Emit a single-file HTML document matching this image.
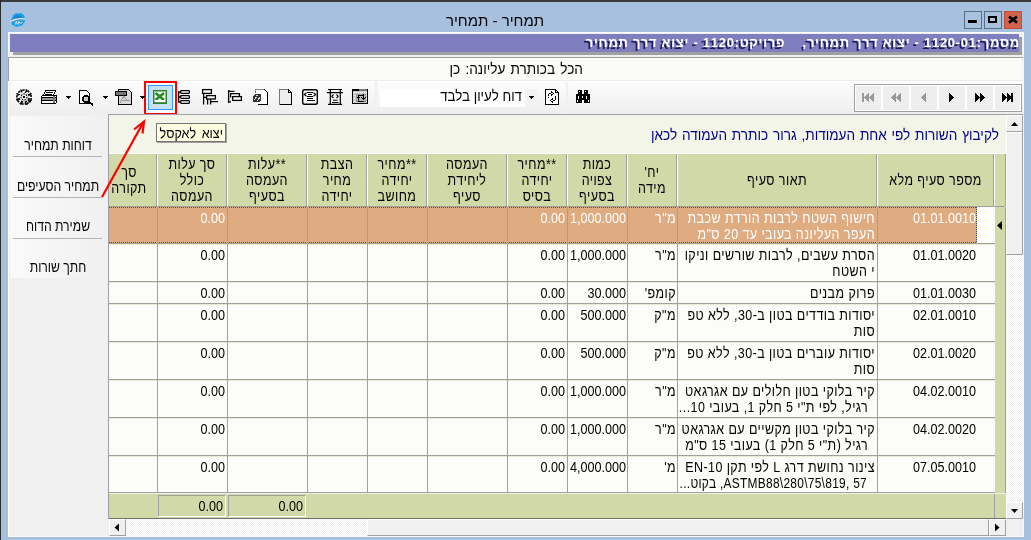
<!DOCTYPE html>
<html><head><meta charset="utf-8">
<style>
*{margin:0;padding:0;box-sizing:border-box}
html,body{width:1031px;height:540px;overflow:hidden;background:#A7C0DD;}
body{will-change:transform;font-family:"Liberation Sans",sans-serif;color:#000}
.a{position:absolute}
.t{position:absolute;white-space:nowrap;font-size:13px;line-height:16px}
.r{text-align:right;direction:rtl}
.hl{position:absolute;height:1px}
.vl{position:absolute;width:1px}
.num{font-size:12px;transform-origin:0 50%;transform:scaleY(1.12)}
</style></head><body>
<!-- window frame -->
<div class="a" style="left:0;top:0;width:1031px;height:2px;background:#3A3A3A"></div>
<div class="a" style="left:0;top:0;width:1px;height:540px;background:#2A2A2A"></div>

<!-- title -->
<div class="t" id="title" style="left:400px;top:12px;width:190px;text-align:center;font-size:15px;line-height:18px;direction:rtl">תמחיר - תמחיר</div>

<!-- client -->
<div class="a" id="client" style="left:8px;top:32px;width:1016px;height:505px;background:#F0F0F0;border-top:1px solid #FFF;border-left:1px solid #FFF;border-right:1px solid #F8F8F8;border-bottom:1px solid #F8F8F8"></div>

<!-- purple header -->
<div class="a" style="left:13px;top:37px;width:1009px;height:18px;background:#A0A0A0"></div>
<div class="a" style="left:10px;top:34px;width:1009px;height:18px;background:#7F7FBF"></div>

<!-- info row -->
<div class="a" style="left:8px;top:57px;width:1015px;height:1px;background:#A0A0A0"></div>
<div class="a" style="left:8px;top:57px;width:1px;height:24px;background:#A0A0A0"></div>
<div class="a" style="left:9px;top:58px;width:1013px;height:22px;background:#FBFBF7"></div>
<div class="t r" style="left:402px;top:61px;width:181px;font-size:13.6px;word-spacing:1.5px;transform:scaleY(1.1);transform-origin:0 0">הכל בכותרת עליונה: כן</div>
<div class="a" style="left:9px;top:80px;width:1014px;height:1px;background:#ECECEA"></div>

<!-- toolbar band -->
<div class="a" style="left:9px;top:81px;width:1014px;height:33px;background:#F0F0F0"></div>



<!-- toolbar strips -->
<div class="a" style="left:9px;top:81px;width:1014px;height:35px;background:#F0F0F0;border-top:1px solid #FFF"></div>
<div class="a" style="left:10px;top:82px;width:365px;height:33px;border-radius:3px;background:linear-gradient(#FDFDFD,#EDEDED)"></div>
<div class="a" style="left:377px;top:82px;width:189px;height:33px;border-radius:3px;background:linear-gradient(#FDFDFD,#EDEDED)"></div>
<div class="a" style="left:568px;top:82px;width:455px;height:33px;border-radius:3px;background:linear-gradient(#FDFDFD,#EDEDED)"></div>

<!-- combo -->
<div class="a" style="left:380px;top:89px;width:157px;height:18px;background:#FFF"></div>
<div class="a" style="left:525px;top:89px;width:12px;height:18px;background:#F3F3F3"></div>
<div class="t r" style="left:400px;top:88px;width:122px;font-size:13.3px;line-height:16px;transform:scaleY(1.1);transform-origin:0 0">דוח לעיון בלבד</div>
<!-- red highlight box -->
<div class="a" style="left:146px;top:83px;width:29px;height:30px;background:#F4FAFE"></div>
<div class="a" style="left:148px;top:85px;width:25px;height:25px;border:1px solid #3399FF;background:#C6E0F8"></div>
<div class="a" style="left:144px;top:81px;width:33px;height:34px;border:2px solid #FF0000"></div>
<!-- nav box -->
<div class="a" style="left:854px;top:84px;width:168px;height:28px;border:1px solid #A0A0A0;background:#FFF"></div>
<div class="a" style="left:856px;top:86px;width:25px;height:24px;background:#EEE"></div>
<div class="a" style="left:883px;top:86px;width:26px;height:24px;background:#EEE"></div>
<div class="a" style="left:911px;top:86px;width:26px;height:24px;background:#EEE"></div>
<div class="a" style="left:939px;top:86px;width:26px;height:24px;background:#EEE"></div>
<div class="a" style="left:967px;top:86px;width:26px;height:24px;background:#EEE"></div>
<div class="a" style="left:995px;top:86px;width:25px;height:24px;background:#EEE"></div>

<svg class="a" style="left:0;top:0" width="1031" height="120" viewBox="0 0 1031 120">
<g shape-rendering="crispEdges">
</g>
<!-- gear -->
<path d="M21.79 92.30 L21.50 89.93 L26.50 89.93 L26.21 92.30 L25.76 92.11 L27.23 90.23 L30.77 93.77 L28.89 95.24 L28.70 94.79 L31.07 94.50 L31.07 99.50 L28.70 99.21 L28.89 98.76 L30.77 100.23 L27.23 103.77 L25.76 101.89 L26.21 101.70 L26.50 104.07 L21.50 104.07 L21.79 101.70 L22.24 101.89 L20.77 103.77 L17.23 100.23 L19.11 98.76 L19.30 99.21 L16.93 99.50 L16.93 94.50 L19.30 94.79 L19.11 95.24 L17.23 93.77 L20.77 90.23 L22.24 92.11 Z" fill="none" stroke="#000" stroke-width="1.6" stroke-dasharray="2.2 1.1"/>
<circle cx="24" cy="97" r="3" fill="none" stroke="#000" stroke-width="1.1" stroke-dasharray="1.6 1"/>
<rect x="23" y="96" width="2" height="2" fill="#000"/>
<path d="M28 100 L30.5 102.5 M25 102.5 L26 104.5" stroke="#000" stroke-width="1.5"/>
<g shape-rendering="crispEdges">
<!-- printer -->
<path d="M45.5 90.5 H55.5 L53.5 95.5 H43.5 Z" fill="#FFF" stroke="#000"/>
<path d="M46 92.5 H53 M45 94 H52" stroke="#000"/>
<rect x="41.5" y="95.5" width="15" height="8" rx="1.5" fill="#FFF" stroke="#000"/>
<rect x="42" y="98" width="14" height="2" fill="#999"/>
<path d="M42 97.5 H56 M42 100.5 H56" stroke="#000"/>
<rect x="53" y="96" width="2" height="7" fill="#777"/>
<path d="M65 96 H71 L68 99 Z" fill="#000"/>
<!-- preview -->
<path d="M79.5 90.5 H86.5 L89.5 93.5 V103.5 H79.5 Z" fill="#FFF" stroke="#000"/>
<circle cx="86" cy="99" r="3" fill="#CCC" stroke="#000" stroke-width="1.5"/>
<path d="M88 101 L93 105" stroke="#000" stroke-width="2"/>
<path d="M102 96 H108 L105 99 Z" fill="#000"/>
<!-- pdf -->
<path d="M118.5 89.5 H128.5 L131.5 92.5 V104.5 H118.5 Z" fill="#D8D8D8" stroke="#000"/>
<rect x="115" y="91" width="12" height="5" fill="#000"/>
<rect x="116" y="92" width="10" height="3" fill="#777"/>
<path d="M120 103 Q123 97 124 96 Q126 101 130 101 M121 100 H129" stroke="#999" fill="none"/>
<path d="M139 96 H145 L142 99 Z" fill="#000"/>
<!-- excel -->
<rect x="153" y="90" width="14" height="14" fill="#2F7F2F"/>
<rect x="154" y="91" width="12" height="12" fill="#8CC88C"/>
<rect x="155" y="92" width="10" height="10" fill="#FFF"/>
<path d="M155.5 93 L164 100 M164 93 L155.5 100" stroke="#2A8A2A" stroke-width="2.8" shape-rendering="geometricPrecision"/>
<rect x="155" y="100" width="10" height="2" fill="#FFF"/>
<rect x="154" y="102" width="12" height="1" fill="#4A9A4A"/>
</g>
<g fill="none" stroke="#000" stroke-width="1.3">
<!-- icon 9 stacked -->
<rect fill="#FFF" x="180.6" y="90.6" width="8.8" height="2.8" rx="0.8"/>
<rect fill="#FFF" x="180.6" y="95.6" width="8.8" height="2.8" rx="0.8"/>
<rect fill="#FFF" x="180.6" y="100.6" width="8.8" height="2.8" rx="0.8"/>
<path d="M178.6 92 V102 M178 92 H180.5 M178 97 H180.5 M178 102 H180.5"/>
<!-- icon 10 tree -->
<rect fill="#FFF" x="202.6" y="89.6" width="8.8" height="3.8"/>
<rect fill="#FFF" x="206.6" y="95.6" width="8.8" height="3.4"/>
<path d="M203.6 93.5 V104.5 M203.6 97.3 H206.5 M207.6 99 V104.5 M210.6 99 V104.5 M210 101.6 H218"/>
<!-- icon 11 -->
<path d="M228.6 90 V103 M228 91.4 H234.5 M228 101.8 H231"/>
<path d="M230.6 97.4 V93.6 H239.4 V96.2"/>
<rect fill="#FFF" x="232.6" y="96.6" width="8.8" height="3.8"/>
</g>
<g shape-rendering="crispEdges">
<!-- icon 12 -->
<path d="M255.5 93 V89.5 H264.5 L267.5 92.5 V104.5 H258" fill="#FFF" stroke="#000"/>
<path d="M255.5 93 V89.5 H264" fill="none" stroke="#888"/>
<path d="M253 96 L255 94 H261 V101 L259 102 H252.5 V96 Z" fill="#333"/>
<path d="M254 100 L256.5 97 M257 101 L260 97.5 M256 95.5 L258 95" stroke="#DDD"/>
<!-- icon 13 blank -->
<path d="M279.5 104.5 V89.5 H288.5" fill="none" stroke="#777"/>
<rect x="280" y="90" width="11" height="14" fill="#EEE"/>
<path d="M288.5 89.5 L291.5 92.5 V104.5 H279.5" fill="none" stroke="#000"/>
<path d="M288.5 89.5 V92.5 H291.5" fill="none" stroke="#000"/>
</g>
<g fill="none" stroke="#000">
<!-- icon 14 -->
<rect x="302.7" y="89.7" width="14.6" height="14.6" rx="1.8" stroke-width="1.4" fill="#FFF"/>
<path d="M307 92.5 H313 M308 94.5 H312 M307 96.5 H313 M307 98.5 H313 M307 100.5 H315" stroke-width="1.1"/>
<path d="M306.5 92.8 L304.3 94.5 L306.5 96.2 M313.5 92.8 L315.7 94.5 L313.5 96.2" stroke-width="1.1"/>
<!-- icon 15 -->
<path d="M328 89.5 H342 M327 92.6 H343 M328 104.3 H342 M330.3 89 V104.5 M340.3 89 V104.5" stroke-width="1.2"/>
<path d="M333.5 94.5 L331.8 96.3 L333.5 98 M336.5 94.5 L338.2 96.3 L336.5 98 M333 100.3 H337.5 M332 102.5 H338.5" stroke-width="1.1"/>
</g>
<g shape-rendering="crispEdges">
<!-- icon 16 -->
<rect x="352" y="89" width="16" height="15" fill="#000"/>
<rect x="353" y="91" width="14" height="12" fill="#CCC"/>
<rect x="359" y="89" width="8" height="2" fill="#777"/>
<path d="M354 92.5 H367 M354 95.5 H367 M354 98.5 H367 M354 101.5 H367" stroke="#FFF" stroke-dasharray="1 1"/>
<rect x="356" y="94" width="10" height="8" fill="#999"/>
<rect x="357" y="95" width="8" height="6" fill="#BBB"/>
<path d="M358.5 102 V96.5 M356.5 98.5 L358.5 96.5 L360.5 98.5 M363.5 94 V99.5 M361.5 97.5 L363.5 99.5 L365.5 97.5 M358 95.5 H363 M359 101.5 H364" stroke="#000" fill="none"/>
</g>
<g shape-rendering="crispEdges">
<!-- combo arrow -->
<path d="M528 96 H534 L531 99 Z" fill="#000"/>
<!-- refresh doc -->
<path d="M545.5 89.5 H555.5 L558.5 92.5 V104.5 H545.5 Z" fill="#FFF" stroke="#000"/>
<path d="M555.5 89.5 V92.5 H558.5" fill="none" stroke="#000"/>
<path d="M548.5 98 V95.5 Q548.5 93.5 551 93.5 H552" stroke="#000" stroke-dasharray="1.5 0.8" fill="none"/>
<path d="M551 91.5 L553.5 93.5 L551 95.5" stroke="#000" fill="none"/>
<path d="M555.5 96 V98.5 Q555.5 100.5 553 100.5 H552" stroke="#000" stroke-dasharray="1.5 0.8" fill="none"/>
<path d="M553 98.5 L550.5 100.5 L553 102.5" stroke="#000" fill="none"/>
<!-- binoculars -->
<g fill="#000">
<rect x="578" y="90" width="4" height="5"/><rect x="576" y="94" width="7" height="9"/>
<rect x="584" y="90" width="4" height="5"/><rect x="583" y="94" width="7" height="9"/>
</g>
<g fill="#FFF">
<rect x="579" y="91" width="1" height="1"/><rect x="585" y="91" width="1" height="1"/>
<rect x="578" y="96" width="1" height="3"/><rect x="582" y="96" width="1" height="2"/><rect x="586" y="96" width="1" height="3"/>
<rect x="577" y="100" width="1" height="2"/><rect x="588" y="100" width="1" height="2"/>
<rect x="582" y="100" width="2" height="3"/>
</g>
<!-- nav icons -->
<g fill="#999">
<rect x="862" y="93" width="2" height="9"/>
<path d="M864 97.5 L869 93 V102 Z M869 97.5 L874 93 V102 Z"/>
<path d="M891 97.5 L896 93 V102 Z M896 97.5 L901 93 V102 Z"/>
<path d="M921 97.5 L926 93 V102 Z"/>
</g>
<g fill="#000">
<path d="M949 93 L954.5 97.5 L949 102 Z"/>
<path d="M975 93 L980 97.5 L975 102 Z M980 93 L985 97.5 L980 102 Z"/>
<path d="M1002 93 L1007 97.5 L1002 102 Z M1007 93 L1012 97.5 L1007 102 Z"/>
<rect x="1011" y="93" width="2" height="9"/>
</g>
</g>
</svg>

<!-- main panel -->
<div class="a" id="panel" style="left:108px;top:114px;width:915px;height:405px;border:1px solid #A0A0A0;background:#F4F5E9"></div>


<!-- sidebar -->
<div class="a" style="left:10px;top:116px;width:94px;height:162px;background:linear-gradient(90deg,#FAFAFA,#F0F0F0)"></div>
<div class="t" style="left:10px;top:136px;width:96px;text-align:center;direction:rtl;font-size:12.2px;transform:scaleY(1.2);transform-origin:0 0">דוחות תמחיר</div>
<div class="a" style="left:13px;top:156px;width:89px;height:1px;background:#B4B4B4"></div>
<div class="t" style="left:10px;top:176.5px;width:96px;text-align:center;direction:rtl;font-size:12.2px;transform:scaleY(1.2);transform-origin:0 0">תמחיר הסעיפים</div>
<div class="a" style="left:13px;top:197px;width:89px;height:1px;background:#B4B4B4"></div>
<div class="t" style="left:10px;top:217px;width:96px;text-align:center;direction:rtl;font-size:12.2px;transform:scaleY(1.2);transform-origin:0 0">שמירת הדוח</div>
<div class="a" style="left:13px;top:238px;width:89px;height:1px;background:#B4B4B4"></div>
<div class="t" style="left:10px;top:258px;width:96px;text-align:center;direction:rtl;font-size:12.2px;transform:scaleY(1.2);transform-origin:0 0">חתך שורות</div>

<!-- title icon -->
<svg class="a" style="left:9px;top:11px" width="18" height="18" viewBox="0 0 18 18">
<path d="M5 3.5 Q7 1.5 9.5 2.5 Q12 1 14 3.5 Q16.5 4.5 15.5 7.5 Q17 10 14.5 12.5 Q13.5 15.5 10 15 Q7.5 17 5 14.5 Q2 14 2.5 11 Q1 8 3.5 6.5 Q3 4.5 5 3.5Z" fill="#1AA0E8"/>
<path d="M6 5 Q9 3.5 12 5 Q14 6.5 13 8 L5 8 Q4.5 6 6 5Z" fill="#1A6FB8" opacity="0.6"/>
<path d="M1.5 10.5 Q8 6.5 16 8.2" stroke="#F4F4F4" stroke-width="1.3" fill="none"/>
<path d="M2 11.3 Q8 8 15.5 9" stroke="#8A9AAA" stroke-width="0.7" fill="none"/>
<path d="M6.5 13.5 L7.2 10.5 L8.5 13.5 M9 13.5 L9.5 10.5 Q11 10.5 10.5 12 L9.5 12 M11.5 13 Q12.5 10 13.5 11.5" stroke="#E8E8E8" stroke-width="0.9" fill="none"/>
</svg>
<!-- title buttons -->
<div class="a" style="left:964px;top:11px;width:18px;height:18px;border:1px solid #5A6E8A;background:#A9C2DE"></div>
<div class="a" style="left:968px;top:20px;width:9px;height:3px;background:#000"></div>
<div class="a" style="left:984px;top:11px;width:18px;height:18px;border:1px solid #5A6E8A;background:#A9C2DE"></div>
<div class="a" style="left:988px;top:16px;width:9px;height:7px;border:2px solid #000;border-top-width:2px"></div>
<div class="a" style="left:1004px;top:11px;width:18px;height:18px;border:1px solid #C0503A;background:#D0654F"></div>
<svg class="a" style="left:1007px;top:15px" width="12" height="9" viewBox="0 0 12 9"><path d="M2 1.6 L10 7.6 M10 1.6 L2 7.6" stroke="#000" stroke-width="2.6"/></svg>

<!-- purple header text -->
<div class="t" id="ptext" style="left:502px;top:36px;width:518px;text-align:right;direction:rtl;font-weight:bold;font-size:13px;line-height:14px;letter-spacing:0.72px;color:#FFF;text-shadow:-2px 2px 0 #1C1C58">מסמך:1120-01 - יצוא דרך תמחיר,&nbsp;&nbsp;&nbsp; פרויקט:1120 - יצוא דרך תמחיר</div>
<style>.hb{font-size:12.5px;letter-spacing:0.42px;line-height:13.333px;transform:scaleY(1.2);transform-origin:0 0} .nm{font-size:12.6px;line-height:14.159px;transform:scaleY(1.13);transform-origin:0 0;text-align:right}</style>
<div class="a" style="left:109px;top:115px;width:897px;height:38px;background:#F4F5E9"></div>
<div class="t r" style="left:601px;top:127px;width:398px;font-size:13.6px;word-spacing:1px;color:#000080;transform:scaleY(1.1);transform-origin:0 0">לקיבוץ השורות לפי אחת העמודות, גרור כותרת העמודה לכאן</div>
<div class="a" style="left:109px;top:153px;width:896px;height:53px;background:#D1D9A9;border-top:1px solid #FFF"></div>
<div class="a" style="left:109px;top:206px;width:896px;height:1px;background:#A0A0A0"></div>
<div class="a" style="left:156px;top:154px;width:1px;height:52px;background:#A0A0A0"></div>
<div class="a" style="left:157px;top:154px;width:1px;height:52px;background:#FFF"></div>
<div class="a" style="left:226px;top:154px;width:1px;height:52px;background:#A0A0A0"></div>
<div class="a" style="left:227px;top:154px;width:1px;height:52px;background:#FFF"></div>
<div class="a" style="left:306px;top:154px;width:1px;height:52px;background:#A0A0A0"></div>
<div class="a" style="left:307px;top:154px;width:1px;height:52px;background:#FFF"></div>
<div class="a" style="left:366px;top:154px;width:1px;height:52px;background:#A0A0A0"></div>
<div class="a" style="left:367px;top:154px;width:1px;height:52px;background:#FFF"></div>
<div class="a" style="left:426px;top:154px;width:1px;height:52px;background:#A0A0A0"></div>
<div class="a" style="left:427px;top:154px;width:1px;height:52px;background:#FFF"></div>
<div class="a" style="left:506px;top:154px;width:1px;height:52px;background:#A0A0A0"></div>
<div class="a" style="left:507px;top:154px;width:1px;height:52px;background:#FFF"></div>
<div class="a" style="left:566px;top:154px;width:1px;height:52px;background:#A0A0A0"></div>
<div class="a" style="left:567px;top:154px;width:1px;height:52px;background:#FFF"></div>
<div class="a" style="left:626px;top:154px;width:1px;height:52px;background:#A0A0A0"></div>
<div class="a" style="left:627px;top:154px;width:1px;height:52px;background:#FFF"></div>
<div class="a" style="left:676px;top:154px;width:1px;height:52px;background:#A0A0A0"></div>
<div class="a" style="left:677px;top:154px;width:1px;height:52px;background:#FFF"></div>
<div class="a" style="left:876px;top:154px;width:1px;height:52px;background:#A0A0A0"></div>
<div class="a" style="left:877px;top:154px;width:1px;height:52px;background:#FFF"></div>
<div class="a" style="left:993px;top:154px;width:1px;height:52px;background:#A0A0A0"></div>
<div class="a" style="left:994px;top:154px;width:1px;height:52px;background:#FFF"></div>
<div class="a" style="left:1005px;top:154px;width:1px;height:52px;background:#A0A0A0"></div>
<div class="a" style="left:109px;top:154px;width:47px;height:52px;overflow:hidden"><div class="t hb" style="left:-30px;top:11.30px;width:100px;text-align:center;direction:rtl">סך<br>תקורה</div></div>
<div class="t hb" style="left:157px;top:157.30px;width:70px;text-align:center;direction:rtl">סך עלות<br>כולל<br>העמסה</div>
<div class="t hb" style="left:227px;top:157.30px;width:80px;text-align:center;direction:rtl">**עלות<br>העמסה<br>בסעיף</div>
<div class="t hb" style="left:307px;top:157.30px;width:60px;text-align:center;direction:rtl">הצבת<br>מחיר<br>יחידה</div>
<div class="t hb" style="left:367px;top:157.30px;width:60px;text-align:center;direction:rtl">**מחיר<br>יחידה<br>מחושב</div>
<div class="t hb" style="left:427px;top:157.30px;width:80px;text-align:center;direction:rtl">העמסה<br>ליחידת<br>סעיף</div>
<div class="t hb" style="left:507px;top:157.30px;width:60px;text-align:center;direction:rtl">**מחיר<br>יחידה<br>בסיס</div>
<div class="t hb" style="left:567px;top:157.30px;width:60px;text-align:center;direction:rtl">כמות<br>צפויה<br>בסעיף</div>
<div class="t hb" style="left:627px;top:165.30px;width:50px;text-align:center;direction:rtl">יח'<br>מידה</div>
<div class="t hb" style="left:677px;top:173.30px;width:200px;text-align:center;direction:rtl">תאור סעיף</div>
<div class="t hb" style="left:877px;top:173.30px;width:117px;text-align:center;direction:rtl">מספר סעיף מלא</div>
<div class="a" style="left:109px;top:207px;width:886px;height:286px;background:#FCFCF8"></div>
<div class="a" style="left:995px;top:207px;width:10px;height:286px;background:#D1D9A9"></div>
<div class="a" style="left:1005px;top:207px;width:1px;height:286px;background:#A0A0A0"></div>
<div class="a" style="left:109px;top:207px;width:868px;height:36px;background:#DFAB80"></div>
<div class="a" style="left:109px;top:207px;width:868px;height:1px;background:repeating-linear-gradient(90deg,#2B5C8F 0 1px,#DFAB80 1px 2px)"></div>
<div class="a" style="left:109px;top:242px;width:868px;height:1px;background:repeating-linear-gradient(90deg,#2B5C8F 0 1px,#DFAB80 1px 2px)"></div>
<div class="a" style="left:976px;top:207px;width:1px;height:36px;background:repeating-linear-gradient(180deg,#2B5C8F 0 1px,#DFAB80 1px 2px)"></div>
<div class="a" style="left:109px;top:243px;width:886px;height:1px;background:#A0A0A0"></div>
<div class="a" style="left:109px;top:244px;width:886px;height:1px;background:#E8EDD0"></div>
<div class="a" style="left:109px;top:281px;width:886px;height:1px;background:#A0A0A0"></div>
<div class="a" style="left:109px;top:282px;width:886px;height:1px;background:#E8EDD0"></div>
<div class="a" style="left:109px;top:303px;width:886px;height:1px;background:#A0A0A0"></div>
<div class="a" style="left:109px;top:304px;width:886px;height:1px;background:#E8EDD0"></div>
<div class="a" style="left:109px;top:341px;width:886px;height:1px;background:#A0A0A0"></div>
<div class="a" style="left:109px;top:342px;width:886px;height:1px;background:#E8EDD0"></div>
<div class="a" style="left:109px;top:379px;width:886px;height:1px;background:#A0A0A0"></div>
<div class="a" style="left:109px;top:380px;width:886px;height:1px;background:#E8EDD0"></div>
<div class="a" style="left:109px;top:417px;width:886px;height:1px;background:#A0A0A0"></div>
<div class="a" style="left:109px;top:418px;width:886px;height:1px;background:#E8EDD0"></div>
<div class="a" style="left:109px;top:455px;width:886px;height:1px;background:#A0A0A0"></div>
<div class="a" style="left:109px;top:456px;width:886px;height:1px;background:#E8EDD0"></div>
<div class="a" style="left:109px;top:492px;width:886px;height:1px;background:#A0A0A0"></div>
<div class="a" style="left:157px;top:207px;width:1px;height:285px;background:#A0A0A0"></div>
<div class="a" style="left:227px;top:207px;width:1px;height:285px;background:#A0A0A0"></div>
<div class="a" style="left:307px;top:207px;width:1px;height:285px;background:#A0A0A0"></div>
<div class="a" style="left:367px;top:207px;width:1px;height:285px;background:#A0A0A0"></div>
<div class="a" style="left:427px;top:207px;width:1px;height:285px;background:#A0A0A0"></div>
<div class="a" style="left:507px;top:207px;width:1px;height:285px;background:#A0A0A0"></div>
<div class="a" style="left:567px;top:207px;width:1px;height:285px;background:#A0A0A0"></div>
<div class="a" style="left:627px;top:207px;width:1px;height:285px;background:#A0A0A0"></div>
<div class="a" style="left:677px;top:207px;width:1px;height:285px;background:#A0A0A0"></div>
<div class="a" style="left:877px;top:207px;width:1px;height:285px;background:#A0A0A0"></div>
<svg class="a" style="left:996px;top:220px" width="8" height="11"><path d="M1 5.5 L6 1 V10 Z" fill="#000"/></svg>
<div class="t nm" style="left:870px;top:211.00px;width:106px;color:#FFF">01.01.0010</div>
<div class="t r hb" style="left:671px;top:210.80px;width:204px;color:#FFF">חישוף השטח לרבות הורדת שכבת</div>
<div class="t r hb" style="left:671px;top:226.80px;width:204px;color:#FFF">העפר העליונה בעובי עד 20 ס"מ</div>
<div class="t r hb" style="left:628px;top:210.80px;width:48px;color:#FFF;overflow:hidden">מ"ר</div>
<div class="t nm" style="left:561px;top:211.00px;width:65px;color:#FFF">1,000.000</div>
<div class="t nm" style="left:500px;top:211.00px;width:65px;color:#FFF">0.00</div>
<div class="t nm" style="left:158px;top:211.00px;width:67px;color:#FFF">0.00</div>
<div class="t nm" style="left:870px;top:248.00px;width:106px;color:#000">01.01.0020</div>
<div class="t r hb" style="left:671px;top:247.80px;width:204px;color:#000">הסרת עשבים, לרבות שורשים וניקו</div>
<div class="t r hb" style="left:671px;top:263.80px;width:204px;color:#000">י השטח</div>
<div class="t r hb" style="left:628px;top:247.80px;width:48px;color:#000;overflow:hidden">מ"ר</div>
<div class="t nm" style="left:561px;top:248.00px;width:65px;color:#000">1,000.000</div>
<div class="t nm" style="left:500px;top:248.00px;width:65px;color:#000">0.00</div>
<div class="t nm" style="left:158px;top:248.00px;width:67px;color:#000">0.00</div>
<div class="t nm" style="left:870px;top:286.00px;width:106px;color:#000">01.01.0030</div>
<div class="t r hb" style="left:671px;top:285.80px;width:204px;color:#000">פרוק מבנים</div>
<div class="t r hb" style="left:628px;top:285.80px;width:48px;color:#000;overflow:hidden">קומפ'</div>
<div class="t nm" style="left:561px;top:286.00px;width:65px;color:#000">30.000</div>
<div class="t nm" style="left:500px;top:286.00px;width:65px;color:#000">0.00</div>
<div class="t nm" style="left:158px;top:286.00px;width:67px;color:#000">0.00</div>
<div class="t nm" style="left:870px;top:308.00px;width:106px;color:#000">02.01.0010</div>
<div class="t r hb" style="left:671px;top:307.80px;width:204px;color:#000">יסודות בודדים בטון ב-30, ללא טפ</div>
<div class="t r hb" style="left:671px;top:323.80px;width:204px;color:#000">סות</div>
<div class="t r hb" style="left:628px;top:307.80px;width:48px;color:#000;overflow:hidden">מ"ק</div>
<div class="t nm" style="left:561px;top:308.00px;width:65px;color:#000">500.000</div>
<div class="t nm" style="left:500px;top:308.00px;width:65px;color:#000">0.00</div>
<div class="t nm" style="left:158px;top:308.00px;width:67px;color:#000">0.00</div>
<div class="t nm" style="left:870px;top:346.00px;width:106px;color:#000">02.01.0020</div>
<div class="t r hb" style="left:671px;top:345.80px;width:204px;color:#000">יסודות עוברים בטון ב-30, ללא טפ</div>
<div class="t r hb" style="left:671px;top:361.80px;width:204px;color:#000">סות</div>
<div class="t r hb" style="left:628px;top:345.80px;width:48px;color:#000;overflow:hidden">מ"ק</div>
<div class="t nm" style="left:561px;top:346.00px;width:65px;color:#000">500.000</div>
<div class="t nm" style="left:500px;top:346.00px;width:65px;color:#000">0.00</div>
<div class="t nm" style="left:158px;top:346.00px;width:67px;color:#000">0.00</div>
<div class="t nm" style="left:870px;top:384.00px;width:106px;color:#000">04.02.0010</div>
<div class="t r hb" style="left:671px;top:383.80px;width:204px;color:#000">קיר בלוקי בטון חלולים עם אגרגאט</div>
<div class="t r hb" style="left:664px;top:399.80px;width:204px;color:#000">רגיל, לפי ת"י 5 חלק 1, בעובי 10...</div>
<div class="t r hb" style="left:628px;top:383.80px;width:48px;color:#000;overflow:hidden">מ"ר</div>
<div class="t nm" style="left:561px;top:384.00px;width:65px;color:#000">1,000.000</div>
<div class="t nm" style="left:500px;top:384.00px;width:65px;color:#000">0.00</div>
<div class="t nm" style="left:158px;top:384.00px;width:67px;color:#000">0.00</div>
<div class="t nm" style="left:870px;top:422.00px;width:106px;color:#000">04.02.0020</div>
<div class="t r hb" style="left:671px;top:421.80px;width:204px;color:#000">קיר בלוקי בטון מקשיים עם אגרגאט</div>
<div class="t r hb" style="left:664px;top:437.80px;width:204px;color:#000">רגיל (ת"י 5 חלק 1) בעובי 15 ס"מ</div>
<div class="t r hb" style="left:628px;top:421.80px;width:48px;color:#000;overflow:hidden">מ"ר</div>
<div class="t nm" style="left:561px;top:422.00px;width:65px;color:#000">1,000.000</div>
<div class="t nm" style="left:500px;top:422.00px;width:65px;color:#000">0.00</div>
<div class="t nm" style="left:158px;top:422.00px;width:67px;color:#000">0.00</div>
<div class="t nm" style="left:870px;top:460.00px;width:106px;color:#000">07.05.0010</div>
<div class="t r hb" style="left:671px;top:459.80px;width:204px;color:#000">צינור נחושת דרג L לפי תקן EN-10</div>
<div class="a" style="left:678px;top:472px;width:190px;height:20px;overflow:hidden"><div class="t hb" style="font-size:11.9px;letter-spacing:0.3px;left:-27px;top:4.30px;width:216px;text-align:right;direction:ltr;unicode-bidi:bidi-override;color:#000">...טוקב ,ASTMB88\280\75\819, 57</div></div>
<div class="t r hb" style="left:628px;top:459.80px;width:48px;color:#000;overflow:hidden">מ'</div>
<div class="t nm" style="left:561px;top:460.00px;width:65px;color:#000">4,000.000</div>
<div class="t nm" style="left:500px;top:460.00px;width:65px;color:#000">0.00</div>
<div class="t nm" style="left:158px;top:460.00px;width:67px;color:#000">0.00</div>
<div class="a" style="left:109px;top:493px;width:897px;height:1px;background:#EEF0E6"></div>
<div class="a" style="left:109px;top:494px;width:897px;height:24px;background:#D1D9A9"></div>
<div class="a" style="left:994px;top:494px;width:1px;height:24px;background:#A0A0A0"></div>
<div class="a" style="left:158px;top:495px;width:68px;height:22px;border-top:1px solid #A0A0A0;border-left:1px solid #A0A0A0;border-bottom:1px solid #FFF;border-right:1px solid #FFF"></div>
<div class="a" style="left:228px;top:495px;width:78px;height:22px;border-top:1px solid #A0A0A0;border-left:1px solid #A0A0A0;border-bottom:1px solid #FFF;border-right:1px solid #FFF"></div>
<div class="t nm" style="left:150px;top:499.00px;width:73px">0.00</div>
<div class="t nm" style="left:220px;top:499.00px;width:83px">0.00</div>
<div class="a" style="left:109px;top:518px;width:897px;height:1px;background:#707070"></div>
<div class="a" style="left:109px;top:519px;width:897px;height:17px;background:repeating-conic-gradient(#F0F0F0 0 25%,#FFF 0 50%) 0 0/2px 2px"></div>
<div class="a" style="left:109px;top:519px;width:17px;height:17px;background:#F0F0F0;border-top:1px solid #FFF;border-left:1px solid #FFF;border-right:1px solid #A0A0A0;border-bottom:1px solid #A0A0A0"></div>
<div class="a" style="left:367px;top:519px;width:622px;height:17px;background:#F0F0F0;border-top:1px solid #FFF;border-left:1px solid #FFF;border-right:1px solid #A0A0A0;border-bottom:1px solid #A0A0A0"></div>
<div class="a" style="left:989px;top:519px;width:17px;height:17px;background:#F0F0F0;border-top:1px solid #FFF;border-left:1px solid #FFF;border-right:1px solid #A0A0A0;border-bottom:1px solid #A0A0A0"></div>
<svg class="a" style="left:113px;top:522px" width="8" height="11"><path d="M1.5 5.5 L6 1.5 V9.5 Z" fill="#000"/></svg>
<svg class="a" style="left:994px;top:522px" width="8" height="11"><path d="M5.5 5.5 L1 1.5 V9.5 Z" fill="#000"/></svg>
<div class="a" style="left:1006px;top:115px;width:17px;height:404px;background:repeating-conic-gradient(#F0F0F0 0 25%,#FFF 0 50%) 0 0/2px 2px"></div>
<div class="a" style="left:1006px;top:115px;width:17px;height:17px;background:#F0F0F0;border-top:1px solid #FFF;border-left:1px solid #FFF;border-right:1px solid #A0A0A0;border-bottom:1px solid #A0A0A0"></div>
<div class="a" style="left:1006px;top:502px;width:17px;height:17px;background:#F0F0F0;border-top:1px solid #FFF;border-left:1px solid #FFF;border-right:1px solid #A0A0A0;border-bottom:1px solid #A0A0A0"></div>
<div class="a" style="left:1006px;top:132px;width:17px;height:123px;background:#F0F0F0;border-top:1px solid #FFF;border-left:1px solid #FFF;border-right:1px solid #A0A0A0;border-bottom:1px solid #A0A0A0"></div>
<div class="a" style="left:1006px;top:519px;width:17px;height:17px;background:#F0F0F0"></div>
<svg class="a" style="left:1010px;top:121px" width="10" height="6"><path d="M1 5 L4.5 1 L8 5 Z" fill="#000"/></svg>
<svg class="a" style="left:1010px;top:508px" width="10" height="6"><path d="M1 1 H8 L4.5 5 Z" fill="#000"/></svg>
<!-- tooltip -->
<div class="a" style="left:156px;top:123px;width:70px;height:19px;background:#FFFFE1;border:1px solid #767676;box-shadow:1px 1px 0 #A0A0A0"></div>
<div class="t r" style="left:152px;top:125px;width:71px;font-size:12.6px;word-spacing:2px;transform:scaleY(1.12);transform-origin:0 0">יצוא לאקסל</div>
<!-- red arrow -->
<svg class="a" style="left:0;top:0" width="1031" height="540" viewBox="0 0 1031 540">
<path d="M102 197 L143.5 122" stroke="#FF0000" stroke-width="2.2" fill="none"/>
<path d="M134 129.5 L144 121.5 L142.5 133.5" stroke="#FF0000" stroke-width="2.2" fill="none"/>
</svg>

</body></html>
